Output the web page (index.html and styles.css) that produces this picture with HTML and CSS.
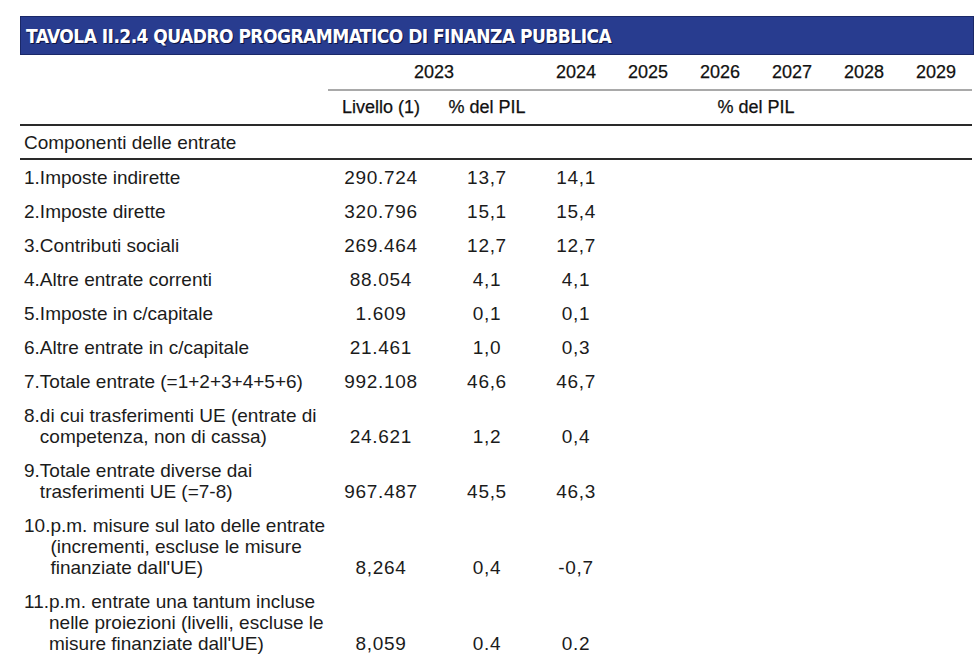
FILE: index.html
```html
<!DOCTYPE html>
<html lang="it">
<head>
<meta charset="utf-8">
<title>Tavola II.2.4</title>
<link rel="stylesheet" href="styles.css">
</head>
<body>
<div class="page">
  <div class="titlebar"><span class="title">TAVOLA II.2.4 QUADRO PROGRAMMATICO DI FINANZA PUBBLICA</span></div>
  <table class="tbl">
    <colgroup>
      <col class="c-label"><col class="c-wide"><col class="c-wide">
      <col class="c-year"><col class="c-year"><col class="c-year"><col class="c-year"><col class="c-year"><col class="c-year">
    </colgroup>
    <thead>
      <tr class="h1">
        <th class="blank"></th>
        <th colspan="2" class="g">2023</th>
        <th class="g">2024</th><th class="g">2025</th><th class="g">2026</th><th class="g">2027</th><th class="g">2028</th><th class="g">2029</th>
      </tr>
      <tr class="h2">
        <th></th>
        <th>Livello (1)</th>
        <th>% del PIL</th>
        <th colspan="6">% del PIL</th>
      </tr>
    </thead>
    <tbody>
      <tr class="section"><td colspan="9">Componenti delle entrate</td></tr>
      <tr><td class="lbl"><span class="n">1.</span><span class="t">Imposte indirette</span></td><td>290.724</td><td>13,7</td><td>14,1</td><td></td><td></td><td></td><td></td><td></td></tr>
      <tr><td class="lbl"><span class="n">2.</span><span class="t">Imposte dirette</span></td><td>320.796</td><td>15,1</td><td>15,4</td><td></td><td></td><td></td><td></td><td></td></tr>
      <tr><td class="lbl"><span class="n">3.</span><span class="t">Contributi sociali</span></td><td>269.464</td><td>12,7</td><td>12,7</td><td></td><td></td><td></td><td></td><td></td></tr>
      <tr><td class="lbl"><span class="n">4.</span><span class="t">Altre entrate correnti</span></td><td>88.054</td><td>4,1</td><td>4,1</td><td></td><td></td><td></td><td></td><td></td></tr>
      <tr><td class="lbl"><span class="n">5.</span><span class="t">Imposte in c/capitale</span></td><td>1.609</td><td>0,1</td><td>0,1</td><td></td><td></td><td></td><td></td><td></td></tr>
      <tr><td class="lbl"><span class="n">6.</span><span class="t">Altre entrate in c/capitale</span></td><td>21.461</td><td>1,0</td><td>0,3</td><td></td><td></td><td></td><td></td><td></td></tr>
      <tr><td class="lbl"><span class="n">7.</span><span class="t">Totale entrate (=1+2+3+4+5+6)</span></td><td>992.108</td><td>46,6</td><td>46,7</td><td></td><td></td><td></td><td></td><td></td></tr>
      <tr><td class="lbl"><span class="n">8.</span><span class="t">di cui trasferimenti UE (entrate di<br>competenza, non di cassa)</span></td><td>24.621</td><td>1,2</td><td>0,4</td><td></td><td></td><td></td><td></td><td></td></tr>
      <tr><td class="lbl"><span class="n">9.</span><span class="t">Totale entrate diverse dai<br>trasferimenti UE (=7-8)</span></td><td>967.487</td><td>45,5</td><td>46,3</td><td></td><td></td><td></td><td></td><td></td></tr>
      <tr><td class="lbl"><span class="n">10.</span><span class="t">p.m. misure sul lato delle entrate<br>(incrementi, escluse le misure<br>finanziate dall'UE)</span></td><td>8,264</td><td>0,4</td><td>-0,7</td><td></td><td></td><td></td><td></td><td></td></tr>
      <tr><td class="lbl"><span class="n">11.</span><span class="t">p.m. entrate una tantum incluse<br>nelle proiezioni (livelli, escluse le<br>misure finanziate dall'UE)</span></td><td>8,059</td><td>0.4</td><td>0.2</td><td></td><td></td><td></td><td></td><td></td></tr>
    </tbody>
  </table>
</div>
</body>
</html>
```

FILE: styles.css
```css
html, body {
  margin: 0;
  padding: 0;
  background: #ffffff;
}

.page {
  padding: 16px 6px 0 20px;
  font-family: "Liberation Sans", Arial, sans-serif;
  color: #1b1b1b;
}

.titlebar {
  width: 954px;
  height: 39px;
  box-sizing: border-box;
  background: #283c8f;
  border: 1px solid #1a2868;
  display: flex;
  align-items: center;
  padding-left: 5px;
}

.title {
  font-family: "DejaVu Sans", sans-serif;
  font-stretch: condensed;
  font-weight: 700;
  font-size: 19px;
  letter-spacing: -0.55px;
  color: #ffffff;
  text-shadow: 1px 1px 0 #0c1240;
  white-space: nowrap;
}

.tbl {
  border-collapse: collapse;
  table-layout: fixed;
  width: 952px;
}

.c-label { width: 308px; }
.c-wide { width: 106px; }
.c-year { width: 72px; }

.tbl th {
  font-weight: normal;
  font-size: 18px;
  -webkit-text-stroke: 0.25px #111;
  color: #111;
  text-align: center;
  padding: 0;
}

.h1 th {
  height: 34px;
}

.h1 th.g {
  border-bottom: 2px solid #a9a9a9;
}

.h2 th {
  height: 33px;
  border-bottom: 2px solid #2a2a2a;
}

.tbl td {
  font-size: 19px;
  line-height: 21px;
  padding: 6.5px 0;
  text-align: center;
  vertical-align: bottom;
  letter-spacing: 0.7px;
}

.tbl .section td {
  height: 32px;
  padding: 0 0 0 4px;
  text-align: left;
  vertical-align: middle;
  letter-spacing: 0;
  border-bottom: 2px solid #2a2a2a;
}

.tbl td.lbl {
  text-align: left;
  padding-left: 4px;
  vertical-align: top;
  letter-spacing: 0;
}

.lbl {
  white-space: nowrap;
}

.lbl .n,
.lbl .t {
  display: inline-block;
  vertical-align: top;
}
```
